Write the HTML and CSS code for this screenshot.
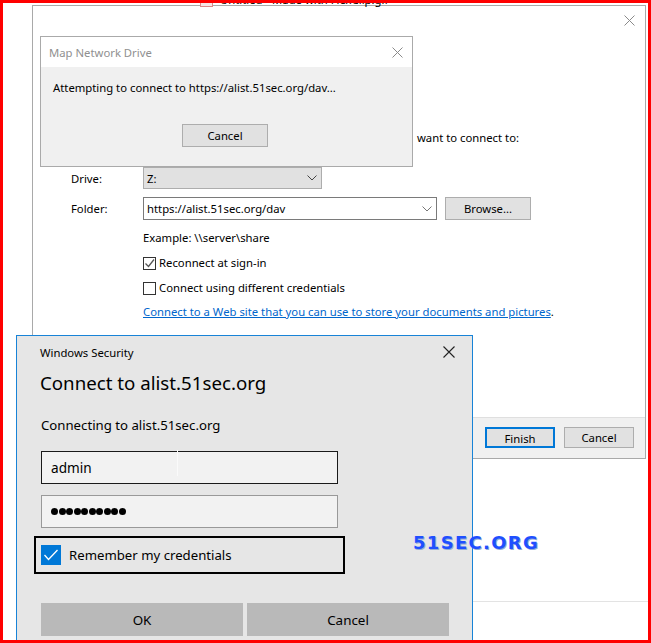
FILE: index.html
```html
<!DOCTYPE html>
<html lang="en">
<head>
    <meta charset="UTF-8">
    <title>Map Network Drive</title>
    <link rel="stylesheet" href="styles.css">
</head>
<body>
<div class="desktop">

    <!-- file name on the desktop behind the windows -->
    <div class="desk-file">
        <span class="gif-icon"></span>
        <span>Untitled - Made with FlexClip.gif</span>
    </div>
    <div class="desk-line"></div>

    <!-- wizard window -->
    <div class="wizard">
        <div class="wizard-bar">
            <svg class="x-icon" width="11" height="11" viewBox="0 0 11 11"><path d="M0.5 0.5 L10.5 10.5 M10.5 0.5 L0.5 10.5" stroke="#8a8a8a" stroke-width="1" fill="none"/></svg>
        </div>
        <div class="wizard-main">
            <!-- only the end of the sentence shows past the progress box -->
            <div class="intro">
                <span>want to connect to:</span>
            </div>

            <div class="row drive-row">
                <span class="label">Drive:</span>
                <div class="select">
                    <span>Z:</span>
                    <svg width="10" height="6" viewBox="0 0 10 6"><path d="M0.5 0.5 L5 5 L9.5 0.5" stroke="#444" fill="none"/></svg>
                </div>
            </div>
            <div class="row folder-row">
                <span class="label">Folder:</span>
                <div class="combo">
                    <span>https://alist.51sec.org/dav</span>
                    <svg width="10" height="6" viewBox="0 0 10 6"><path d="M0.5 0.5 L5 5 L9.5 0.5" stroke="#777" fill="none"/></svg>
                </div>
                <button class="btn browse">Browse...</button>
            </div>
            <div class="indent example">Example: \\server\share</div>
            <label class="indent check-row reconnect">
                <span class="box">
                    <svg width="11" height="11" viewBox="0 0 11 11"><path d="M1.5 5.5 L4.5 8.5 L10 1.5" stroke="#555" stroke-width="1.3" fill="none"/></svg>
                </span>
                Reconnect at sign-in
            </label>
            <label class="indent check-row other-creds">
                <span class="box"></span>
                Connect using different credentials
            </label>
            <div class="indent web-link"><a href="#">Connect to a Web site that you can use to store your documents and pictures</a>.</div>
        </div>
        <div class="wizard-foot">
            <button class="btn default">Finish</button>
            <button class="btn">Cancel</button>
        </div>
    </div>

    <!-- progress box -->
    <div class="progress">
        <div class="progress-title">
            <span>Map Network Drive</span>
            <svg width="11" height="11" viewBox="0 0 11 11"><path d="M0.5 0.5 L10.5 10.5 M10.5 0.5 L0.5 10.5" stroke="#8a8a8a" stroke-width="1" fill="none"/></svg>
        </div>
        <div class="progress-body">
            <p>Attempting to connect to https://alist.51sec.org/dav...</p>
            <button class="btn progress-cancel">Cancel</button>
        </div>
    </div>

    <!-- credential prompt -->
    <div class="security">
        <div class="sec-title">
            <span>Windows Security</span>
            <svg width="12" height="12" viewBox="0 0 12 12"><path d="M0.5 0.5 L11.5 11.5 M11.5 0.5 L0.5 11.5" stroke="#222" stroke-width="1.1" fill="none"/></svg>
        </div>
        <h1 class="sec-heading">Connect to alist.51sec.org</h1>
        <p class="sec-sub">Connecting to alist.51sec.org</p>
        <div class="field user">admin<span class="ibeam"></span></div>
        <div class="field pass">
            <i></i><i></i><i></i><i></i><i></i><i></i><i></i><i></i><i></i><i></i>
        </div>
        <label class="remember">
            <span class="tick">
                <svg width="20" height="20" viewBox="0 0 20 20"><path d="M3.5 10 L7.5 14.5 L16.5 5" stroke="#fff" stroke-width="1.3" fill="none"/></svg>
            </span>
            Remember my credentials
        </label>
        <div class="sec-buttons">
            <button class="sec-btn">OK</button>
            <button class="sec-btn">Cancel</button>
        </div>
    </div>

    <div class="watermark">51SEC.ORG</div>

    <!-- red frame round the capture -->
    <div class="frame"></div>
</div>
</body>
</html>
```

FILE: styles.css
```css
body {
    margin: 0;
    background: #fff;
    font-family: "Noto Sans", "Liberation Sans", sans-serif;
    font-size: 11.3px;
    color: #000;
}
p, h1, h2 {
    margin: 0;
    font-weight: normal;
}
button {
    font-family: inherit;
    font-size: 11.3px;
    color: #000;
    padding: 0;
}

.desktop {
    position: relative;
    width: 651px;
    height: 643px;
    overflow: hidden;
    background: #fff;
}

/* red frame drawn over everything */
.frame {
    position: absolute;
    top: 0;
    left: 0;
    right: 0;
    bottom: 0;
    border: 3px solid #ff0000;
    pointer-events: none;
    z-index: 20;
}

.desk-file {
    position: absolute;
    left: 200px;
    top: -8px;
    display: flex;
    align-items: center;
    gap: 7px;
    white-space: nowrap;
    line-height: 16px;
    z-index: 2;
}
.gif-icon {
    width: 13px;
    height: 13px;
    box-sizing: border-box;
    border: 1px solid #d88;
    background: #f6e6e6;
}
.desk-line {
    position: absolute;
    left: 472px;
    right: 0;
    top: 601px;
    height: 1px;
    background: #e3e3e3;
}

/* common push button */
.btn {
    width: 70px;
    height: 21px;
    box-sizing: border-box;
    border: 1px solid #adadad;
    background: #e1e1e1;
    line-height: 19px;
}
.btn.default {
    border: 2px solid #0078d7;
}

/* wizard */
.wizard {
    position: absolute;
    left: 32px;
    top: 5px;
    width: 614px;
    height: 454px;
    box-sizing: border-box;
    border: 1px solid #a9a9a9;
    background: #fff;
    display: flex;
    flex-direction: column;
    z-index: 1;
}
.wizard-bar {
    display: flex;
    justify-content: flex-end;
    padding: 9px 10px 0 0;
    height: 17px;
}
.wizard-main {
    flex: 1;
    padding-left: 38px;
}
.intro {
    margin-top: 98px;
    width: 448px;
    line-height: 16px;
    white-space: nowrap;
    display: flex;
    justify-content: flex-end;
}
.row {
    display: flex;
    align-items: center;
}
.label {
    width: 72px;
}
.drive-row {
    margin-top: 21px;
}
.select {
    width: 179px;
    height: 22px;
    box-sizing: border-box;
    border: 1px solid #adadad;
    background: #e1e1e1;
    display: flex;
    align-items: center;
    justify-content: space-between;
    padding: 0 4px 0 3px;
}
.folder-row {
    margin-top: 8px;
}
.combo {
    width: 294px;
    height: 23px;
    box-sizing: border-box;
    border: 1px solid #7a7a7a;
    display: flex;
    align-items: center;
    justify-content: space-between;
    padding: 0 4px 0 3px;
}
.browse {
    width: 86px;
    height: 23px;
    margin-left: 8px;
    line-height: 21px;
}
.indent {
    margin-left: 72px;
    line-height: 16px;
}
.example {
    margin-top: 10px;
}
.check-row {
    display: flex;
    align-items: center;
    gap: 3px;
}
.reconnect {
    margin-top: 9px;
}
.other-creds {
    margin-top: 9px;
}
.box {
    width: 13px;
    height: 13px;
    box-sizing: border-box;
    border: 1px solid #333;
    background: #fff;
    display: flex;
    align-items: center;
    justify-content: center;
}
.web-link {
    margin-top: 8px;
    white-space: nowrap;
}
.web-link a {
    color: #0066cc;
}
.wizard-foot {
    height: 41px;
    box-sizing: border-box;
    border-top: 1px solid #dfdfdf;
    background: #f0f0f0;
    display: flex;
    justify-content: flex-end;
    gap: 9px;
    padding: 9px 11px 0 0;
}

/* progress box */
.progress {
    position: absolute;
    left: 40px;
    top: 36px;
    width: 373px;
    height: 131px;
    box-sizing: border-box;
    border: 1px solid #aaaaaa;
    background: #f0f0f0;
    display: flex;
    flex-direction: column;
    z-index: 3;
}
.progress-title {
    height: 30px;
    background: #fff;
    color: #909090;
    display: flex;
    align-items: center;
    justify-content: space-between;
    padding: 0 9px 0 8px;
}
.progress-body {
    padding: 13px 0 0 12px;
    display: flex;
    flex-direction: column;
}
.progress-body p {
    line-height: 16px;
}
.progress-cancel {
    width: 86px;
    height: 23px;
    margin: 28px 0 0 129px;
    line-height: 21px;
}

/* credential prompt */
.security {
    position: absolute;
    left: 16px;
    top: 335px;
    width: 457px;
    height: 320px;
    box-sizing: border-box;
    border: 1px solid #1883d7;
    background: #e6e6e6;
    padding-left: 24px;
    z-index: 4;
}
.sec-title {
    height: 32px;
    display: flex;
    align-items: center;
    justify-content: space-between;
    padding-right: 17px;
    margin-left: -1px;
}
.sec-heading {
    margin: 1px 0 0 -1px;
    font-size: 18.7px;
    line-height: 28px;
}
.sec-sub {
    margin-top: 18px;
    font-size: 13.2px;
    line-height: 20px;
}
.field {
    width: 297px;
    height: 33px;
    box-sizing: border-box;
    background: #f2f2f2;
    display: flex;
    align-items: center;
    padding-left: 9px;
    font-size: 13.6px;
}
.user {
    position: relative;
    margin-top: 16px;
    border: 1px solid #1a1a1a;
}
.ibeam {
    position: absolute;
    left: 135px;
    top: -2px;
    width: 1px;
    height: 26px;
    background: #fafafa;
}
.pass {
    margin-top: 11px;
    border: 1px solid #999;
    gap: 0.5px;
}
.pass i {
    width: 7px;
    height: 7px;
    border-radius: 50%;
    background: #000;
}
.remember {
    margin: 8px 0 0 -7px;
    width: 311px;
    height: 38px;
    box-sizing: border-box;
    border: 2px solid #000;
    display: flex;
    align-items: center;
    gap: 8px;
    padding-left: 5px;
    font-size: 13.2px;
}
.tick {
    width: 20px;
    height: 20px;
    background: #0078d7;
    display: flex;
}
.sec-buttons {
    margin-top: 29px;
    display: flex;
    gap: 4px;
}
.sec-btn {
    width: 202px;
    height: 33px;
    border: none;
    background: #b9b9b9;
    font-size: 13.4px;
}

.watermark {
    position: absolute;
    left: 413px;
    top: 532px;
    font-family: "DejaVu Sans", sans-serif;
    font-weight: bold;
    font-size: 18px;
    letter-spacing: 1.3px;
    color: #1f4fff;
    text-shadow: 1px 1px 0 #93acd6;
    z-index: 6;
}
```
